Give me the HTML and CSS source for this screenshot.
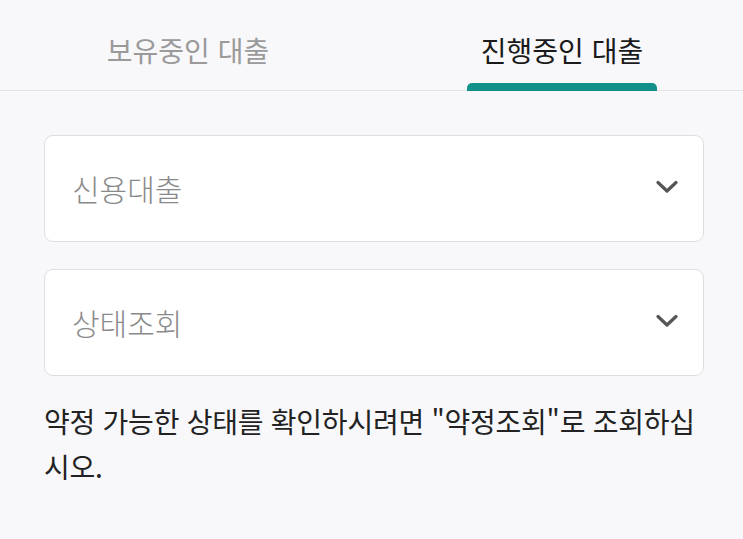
FILE: index.html
```html
<!DOCTYPE html>
<html lang="ko">
<head>
<meta charset="utf-8">
<link rel="stylesheet" href="styles.css">
</head>
<body>
<div class="tabs">
  <div class="tab"><span class="tab-label">보유중인 대출</span></div>
  <div class="tab tab-active"><span class="tab-label">진행중인 대출</span></div>
</div>
<div class="content">
  <div class="select">
    <span class="select-text">신용대출</span>
    <svg class="chev" width="22" height="14" viewBox="0 0 22 14"><path d="M2 2.5 L11 11 L20 2.5" fill="none" stroke="#555" stroke-width="3.2" stroke-linecap="round" stroke-linejoin="round"/></svg>
  </div>
  <div class="select">
    <span class="select-text">상태조회</span>
    <svg class="chev" width="22" height="14" viewBox="0 0 22 14"><path d="M2 2.5 L11 11 L20 2.5" fill="none" stroke="#555" stroke-width="3.2" stroke-linecap="round" stroke-linejoin="round"/></svg>
  </div>
  <p class="notice">약정 가능한 상태를 확인하시려면 "약정조회"로 조회하십시오.</p>
</div>
</body>
</html>
```
FILE: styles.css
```css
html, body {
  margin: 0;
  padding: 0;
  background: #f8f8fa;
  font-family: "Noto Sans CJK KR", "Noto Sans", sans-serif;
}
.tabs {
  display: grid;
  grid-template-columns: 376px 1fr;
  height: 90px;
  border-bottom: 1px solid #e3e3e6;
}
.tab {
  display: flex;
  justify-content: center;
  align-items: flex-start;
  padding-top: 30px;
  font-size: 28px;
  line-height: 40px;
  color: #9a9a9a;
}
.tab-label {
  position: relative;
  display: inline-block;
  padding: 0 14px;
}
.tab-active {
  color: #1a1a1a;
  padding-left: 5px;
}
.tab-active .tab-label::after {
  content: "";
  position: absolute;
  left: 0;
  right: 0;
  top: 53px;
  height: 8px;
  background: #12918a;
  border-radius: 5px 5px 0 0;
}
.content {
  padding: 44px 39px 0 44px;
}
.select {
  display: flex;
  align-items: center;
  justify-content: space-between;
  height: 105px;
  border: 1px solid #dedee0;
  border-radius: 9px;
  background: #ffffff;
  padding: 0 25px 0 27px;
  margin-bottom: 27px;
  box-sizing: content-box;
}
.select-text {
  font-size: 30px;
  font-weight: 300;
  color: #8a8a8a;
  line-height: 40px;
  margin-top: -2px;
}
.chev {
  display: block;
  margin-top: -4px;
}
.notice {
  margin: -4px 0 0 0;
  font-size: 28px;
  line-height: 45px;
  letter-spacing: -0.25px;
  color: #222222;
}
```
